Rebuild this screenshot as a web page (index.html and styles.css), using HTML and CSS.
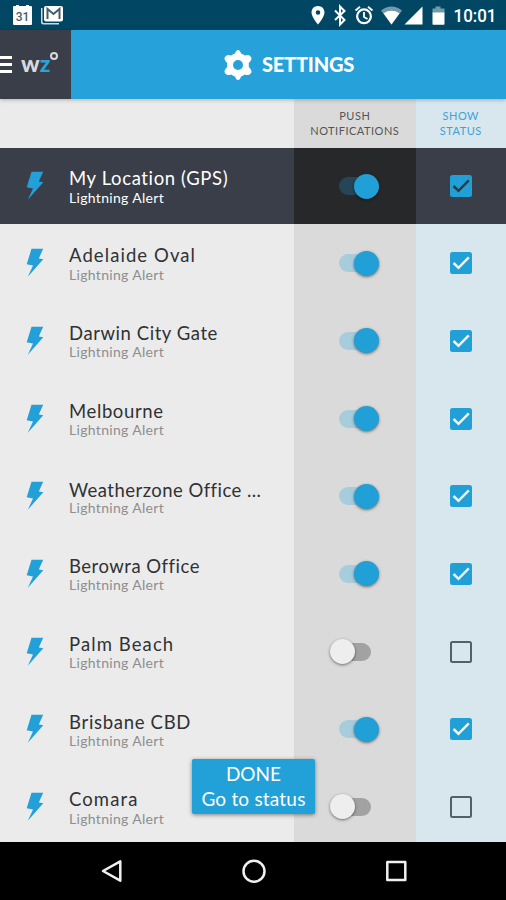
FILE: index.html
```
<!DOCTYPE html>
<html lang="en">
<head>
<meta charset="utf-8">
<title>Settings</title>
<link rel="stylesheet" href="styles.css">
</head>
<body>
<svg class="defs" aria-hidden="true">
  <symbol id="bolt" viewBox="0 0 18 30"><path d="M5.500 .8H17.200L12.800 10.500 17.300 11.300 1.800 28.800 7 17.500 .7 16.300Z"/></symbol>
  <symbol id="tick" viewBox="0 0 22 22"><path d="M3.500 11 8.500 15.800 18.800 5.400" fill="none" stroke="currentColor" stroke-width="2.500"/></symbol>
</svg>
<div class="phone">
  <div class="statusbar">
    <svg viewBox="0 0 506 30" width="506" height="30">
      <g class="white">
        <path d="M14 6h2V5h3v1h7V5h3v1h2q1 0 1 1v17q0 1-1 1H14q-1 0-1-1V7q0-1 1-1Z"/>
        <path d="M41 8v14q0 2.500 2.500 2.500H59V23H44q-1.500 0-1.500-1.500V8Z" opacity=".8"/>
        <rect x="44" y="6" width="19" height="15.500" rx="2"/>
        <path d="M47.500 19V9l6 5 6-5v10" fill="none" stroke="#455d6a" stroke-width="2"/>
        <path fill-rule="evenodd" d="M318 6c-3.800 0-6.500 2.800-6.500 6.500 0 4.700 6.500 12 6.500 12s6.500-7.300 6.500-12C324.500 8.800 321.800 6 318 6Zm0 4.200a2.300 2.300 0 1 1 0 4.600 2.300 2.300 0 0 1 0-4.600Z"/>
        <path d="M335 10.500 344.500 20 340 24.500V6.500L344.500 11 335 20" fill="none" stroke="#fff" stroke-width="2"/>
        <circle cx="364" cy="16.300" r="6.900" fill="none" stroke="#fff" stroke-width="2.200"/>
        <path d="M364 12v5l3.500 2M355.500 10.500 360 6.800M372.500 10.500 368 6.800" fill="none" stroke="#fff" stroke-width="1.800"/>
        <path d="M381 10.500Q391.500 2.500 402 10.500L391.500 24.500Z" opacity=".45"/>
        <path d="M383.500 13.200Q391.500 8.500 399.500 13.200L391.500 24.500Z"/>
        <path d="M422.500 6.500V24.500H404.500Z"/>
        <path d="M435.500 6.500h5v2h4V13h-12V8.500h3Z" opacity=".45"/>
        <path d="M432.500 12.500h12V24q0 .7-.7.700H433q-.5 0-.5-.7Z"/>
      </g>
      <text class="date" x="22.500" y="21" text-anchor="middle">31</text>
      <text class="clock" x="453.500" y="22.300" textLength="43" lengthAdjust="spacingAndGlyphs">10:01</text>
    </svg>
  </div>
  <header class="appbar">
    <div class="brand">
      <div class="burger"><i></i><i></i><i></i></div>
      <div class="logo">w<b>z</b><span class="deg"></span></div>
    </div>
    <div class="title">
      <svg viewBox="-14 -15 28 30" width="28" height="30"><path class="gear" fill-rule="evenodd" d="M-3-11.500Q-2-15 0-15T3-11.500Q5-11 6.800-9.500Q10-10.500 11.500-9.500Q14-8 13.500-6Q13-4 10.800-2V2Q13 4 13.500 6Q14 8 11.500 9.500Q10 10.500 6.800 9.500Q5 11 3 11.500Q2 15 0 15T-3 11.500Q-5 11-6.800 9.500Q-10 10.500-11.500 9.500Q-14 8-13.500 6Q-13 4-10.800 2V-2Q-13-4-13.500-6Q-14-8-11.500-9.500Q-10-10.500-6.800-9.500Q-5-11-3-11.500ZM0-5A5 5 0 1 0 0 5A5 5 0 1 0 0-5Z"/></svg>
      <span>SETTINGS</span>
    </div>
  </header>
  <main class="content">
    <div class="cols">
      <div></div>
      <div class="push">PUSH<br>NOTIFICATIONS</div>
      <div class="show">SHOW<br>STATUS</div>
    </div>
    <div class="row current">
      <div class="place"><svg class="bolt"><use href="#bolt"/></svg><div><p class="name n0">My Location (GPS)</p><p class="sub">Lightning Alert</p></div></div>
      <div class="push"><span class="switch on"></span></div>
      <div class="show"><span class="check on"><svg><use href="#tick"/></svg></span></div>
    </div>
    <div class="row">
      <div class="place"><svg class="bolt"><use href="#bolt"/></svg><div><p class="name n1">Adelaide Oval</p><p class="sub">Lightning Alert</p></div></div>
      <div class="push"><span class="switch on"></span></div>
      <div class="show"><span class="check on"><svg><use href="#tick"/></svg></span></div>
    </div>
    <div class="row">
      <div class="place"><svg class="bolt"><use href="#bolt"/></svg><div><p class="name n2">Darwin City Gate</p><p class="sub">Lightning Alert</p></div></div>
      <div class="push"><span class="switch on"></span></div>
      <div class="show"><span class="check on"><svg><use href="#tick"/></svg></span></div>
    </div>
    <div class="row">
      <div class="place"><svg class="bolt"><use href="#bolt"/></svg><div><p class="name n3">Melbourne</p><p class="sub">Lightning Alert</p></div></div>
      <div class="push"><span class="switch on"></span></div>
      <div class="show"><span class="check on"><svg><use href="#tick"/></svg></span></div>
    </div>
    <div class="row">
      <div class="place"><svg class="bolt"><use href="#bolt"/></svg><div><p class="name n4">Weatherzone Office ...</p><p class="sub">Lightning Alert</p></div></div>
      <div class="push"><span class="switch on"></span></div>
      <div class="show"><span class="check on"><svg><use href="#tick"/></svg></span></div>
    </div>
    <div class="row">
      <div class="place"><svg class="bolt"><use href="#bolt"/></svg><div><p class="name n5">Berowra Office</p><p class="sub">Lightning Alert</p></div></div>
      <div class="push"><span class="switch on"></span></div>
      <div class="show"><span class="check on"><svg><use href="#tick"/></svg></span></div>
    </div>
    <div class="row">
      <div class="place"><svg class="bolt"><use href="#bolt"/></svg><div><p class="name n6">Palm Beach</p><p class="sub">Lightning Alert</p></div></div>
      <div class="push"><span class="switch"></span></div>
      <div class="show"><span class="check"></span></div>
    </div>
    <div class="row">
      <div class="place"><svg class="bolt"><use href="#bolt"/></svg><div><p class="name n7">Brisbane CBD</p><p class="sub">Lightning Alert</p></div></div>
      <div class="push"><span class="switch on"></span></div>
      <div class="show"><span class="check on"><svg><use href="#tick"/></svg></span></div>
    </div>
    <div class="row">
      <div class="place"><svg class="bolt"><use href="#bolt"/></svg><div><p class="name n8">Comara</p><p class="sub">Lightning Alert</p></div></div>
      <div class="push"><span class="switch"></span></div>
      <div class="show"><span class="check"></span></div>
    </div>
    <button class="done"><span>DONE</span><span class="go">Go to status</span></button>
  </main>
  <nav class="navbar">
    <svg viewBox="0 0 506 58" width="506" height="58" fill="none" stroke="#f0f0f0" stroke-width="2.500" stroke-linejoin="round">
      <path d="M120.300 19.300V38.700L103 29Z"/>
      <circle cx="254" cy="29.300" r="10.500"/>
      <rect x="387.300" y="20" width="18" height="18"/>
    </svg>
  </nav>
</div>
</body>
</html>
```
FILE: styles.css
```
* { box-sizing: border-box; }
body { margin: 0; font-family: Lato, "Liberation Sans", sans-serif; background: #000; }
p { margin: 0; }
.defs { display: none; }
.phone { width: 506px; height: 900px; display: flex; flex-direction: column; overflow: hidden; }

.statusbar { height: 30px; background: #014764; }
.statusbar svg, .navbar svg { display: block; }
.white { fill: #fff; }
.date { font: 500 12px Roboto, sans-serif; fill: #455d6a; }
.clock { font: 500 18.500px Roboto, sans-serif; fill: #fff; }

.appbar { height: 69px; flex: none; display: flex; background: #26a1d9; box-shadow: 0 1px 4px rgba(0,0,0,.25); position: relative; z-index: 1; }
.brand { width: 71px; background: #3a3e49; display: flex; align-items: center; padding-bottom: 1px; }
.burger { width: 12px; display: grid; gap: 4px; margin-right: 9px; }
.burger i { height: 3px; background: #fff; }
.logo { display: flex; font: 900 23px/30px Lato, sans-serif; color: #d6dade; margin-top: -3px; letter-spacing: 0; }
.logo b { color: #2ba3d8; font-weight: 900; }
.deg { width: 8px; height: 8px; border: 2px solid #d6dade; border-radius: 50%; margin: 4px 0 0 0; }
.title { flex: 1; display: flex; align-items: center; gap: 10px; padding-left: 153px; color: #fff; font-size: 20px; font-weight: 900; letter-spacing: -.2px; }
.title span { margin-top: -1px; }
.gear { fill: #fff; }

.content { height: 743px; flex: none; background: #ebebeb; overflow: hidden; position: relative; }
.cols, .row { display: grid; grid-template-columns: 294px 121.500px 90.500px; }
.push { background: #dadada; }
.show { background: #d8e6ed; }
.cols { height: 49px; font-size: 11px; line-height: 15px; text-align: center; letter-spacing: .5px; }
.cols > div { padding-top: 9px; }
.cols .push { color: #555; }
.cols .show { color: #3ba3d8; }
.row { height: 77.700px; }
.row > div { display: flex; align-items: center; }
.row .push, .row .show { justify-content: center; }
.current { height: 76.300px; background: #3a3e49; }
.current .push { background: #262829; }
.current .show { background: #3a3e49; }

.place { padding-left: 26px; }
.bolt { width: 18px; height: 30px; margin-right: 25px; fill: #23a0d8; flex: none; }
.name { font-size: 18.500px; line-height: 21px; color: #303234; white-space: nowrap; position: relative; top: 1.300px; }
.n0 { letter-spacing: .62px; top: 1px; }
.n1 { letter-spacing: 1.080px; }
.n2 { letter-spacing: .56px; }
.n3 { letter-spacing: .62px; }
.n4 { letter-spacing: .46px; top: 2.500px; }
.n5 { letter-spacing: .5px; }
.n6 { letter-spacing: 1.100px; }
.n7 { letter-spacing: .7px; }
.n8 { letter-spacing: 1.100px; }
.sub { font-size: 14px; line-height: 17px; color: #8e8e8e; letter-spacing: .32px; position: relative; top: .6px; }
.current .name, .current .sub { color: #fff; }

.switch { position: relative; width: 40px; height: 18px; margin-left: 8px; }
.switch::before { content: ""; position: absolute; left: 0; top: 0; width: 32px; height: 18px; border-radius: 9px; background: #a2a2a2; }
.switch::after { content: ""; position: absolute; left: -9px; top: -3.500px; width: 25px; height: 25px; border-radius: 50%; background: #eee; box-shadow: 0 1px 3px rgba(0,0,0,.5); }
.switch.on::before { background: #a7cddd; }
.switch.on::after { left: 15.500px; background: #219fd7; }
.current .switch.on::before { background: #264657; }

.check { width: 22px; height: 22px; border: 2px solid #536067; border-radius: 2.500px; color: #eef5f9; }
.check.on { border: 0; background: #219fd7; }
.check svg { display: block; width: 22px; height: 22px; }
.current .check { color: #303943; }

.done { position: absolute; left: 192px; top: 660px; width: 123px; height: 55px; border: 0; border-radius: 2px; padding: 0; background: #22a0d8; color: #fff; box-shadow: 0 1px 4px rgba(0,0,0,.45); display: flex; flex-direction: column; align-items: center; justify-content: center; font: 19px/24.500px Lato, sans-serif; }
.go { letter-spacing: .2px; }
.navbar { height: 58px; flex: none; background: #000; }
```
